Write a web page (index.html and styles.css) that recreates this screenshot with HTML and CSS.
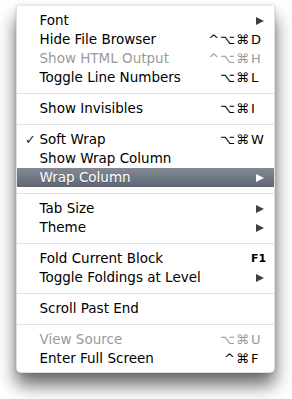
FILE: index.html
```
<!DOCTYPE html>
<html>
<head>
<meta charset="utf-8">
<link rel="stylesheet" href="styles.css">
</head>
<body>
<div class="stage">
  <div class="menu">
    <div class="item"><span class="check"></span><span class="label">Font</span><span class="mods"></span><span class="key"><span class="arrow"></span></span></div>
    <div class="item"><span class="check"></span><span class="label">Hide File Browser</span><span class="mods">^⌥⌘</span><span class="key">D</span></div>
    <div class="item disabled"><span class="check"></span><span class="label">Show HTML Output</span><span class="mods">^⌥⌘</span><span class="key">H</span></div>
    <div class="item"><span class="check"></span><span class="label">Toggle Line Numbers</span><span class="mods">⌥⌘</span><span class="key">L</span></div>
    <div class="sep"></div>
    <div class="item"><span class="check"></span><span class="label">Show Invisibles</span><span class="mods">⌥⌘</span><span class="key">I</span></div>
    <div class="sep"></div>
    <div class="item"><span class="check">✓</span><span class="label">Soft Wrap</span><span class="mods">⌥⌘</span><span class="key">W</span></div>
    <div class="item"><span class="check"></span><span class="label">Show Wrap Column</span><span class="mods"></span><span class="key"></span></div>
    <div class="item active"><span class="check"></span><span class="label">Wrap Column</span><span class="mods"></span><span class="key"><span class="arrow"></span></span></div>
    <div class="sep"></div>
    <div class="item"><span class="check"></span><span class="label">Tab Size</span><span class="mods"></span><span class="key"><span class="arrow"></span></span></div>
    <div class="item"><span class="check"></span><span class="label">Theme</span><span class="mods"></span><span class="key"><span class="arrow"></span></span></div>
    <div class="sep"></div>
    <div class="item"><span class="check"></span><span class="label">Fold Current Block</span><span class="mods"></span><span class="key fkey">F1</span></div>
    <div class="item"><span class="check"></span><span class="label">Toggle Foldings at Level</span><span class="mods"></span><span class="key"><span class="arrow"></span></span></div>
    <div class="sep"></div>
    <div class="item"><span class="check"></span><span class="label">Scroll Past End</span><span class="mods"></span><span class="key"></span></div>
    <div class="sep"></div>
    <div class="item disabled"><span class="check"></span><span class="label">View Source</span><span class="mods">⌥⌘</span><span class="key">U</span></div>
    <div class="item"><span class="check"></span><span class="label">Enter Full Screen</span><span class="mods">^⌘</span><span class="key">F</span></div>
  </div>
</div>
</body>
</html>
```
FILE: styles.css
```
html, body {
  margin: 0;
  padding: 0;
  background: #ffffff;
}

.stage {
  padding: 6px 0 30px 16px;
}

.menu {
  box-sizing: border-box;
  width: 259px;
  padding: 5px 0 4px;
  background: #ffffff;
  border: 1px solid rgba(0, 0, 0, 0.12);
  border-top: none;
  border-radius: 0 0 5px 5px;
  box-shadow: 0 12px 18px rgba(0, 0, 0, 0.6), 0 0 4px rgba(0, 0, 0, 0.15);
  font-family: "DejaVu Sans", sans-serif;
  font-size: 13.5px;
  color: #000;
}

.item {
  display: grid;
  grid-template-columns: 22px 1fr auto 12px;
  height: 19px;
  line-height: 19px;
  padding-right: 11px;
  white-space: nowrap;
}

.check {
  font-size: 13px;
  text-align: center;
  padding-left: 5px;
  color: #222;
}

.label {
  padding-left: 0.5px;
}

.mods {
  text-align: right;
  padding-right: 1px;
  font-size: 13px;
  letter-spacing: 1px;
}

.key {
  display: flex;
  align-items: center;
  font-size: 13px;
}

.fkey {
  font-weight: bold;
  font-size: 11px;
}

.arrow {
  display: block;
  width: 0;
  height: 0;
  margin-left: 5px;
  border-top: 4.5px solid transparent;
  border-bottom: 4.5px solid transparent;
  border-left: 8px solid #404040;
}

.disabled {
  color: #9a9a9a;
}

.active {
  background: linear-gradient(#838a96, #5f6774);
  color: #fff;
  text-shadow: 0 1px 0 rgba(0, 0, 0, 0.25);
}

.active .arrow {
  border-left-color: #fff;
}

.sep {
  height: 1px;
  margin: 6px 0 5px;
  background: #e1e1e1;
}
```
